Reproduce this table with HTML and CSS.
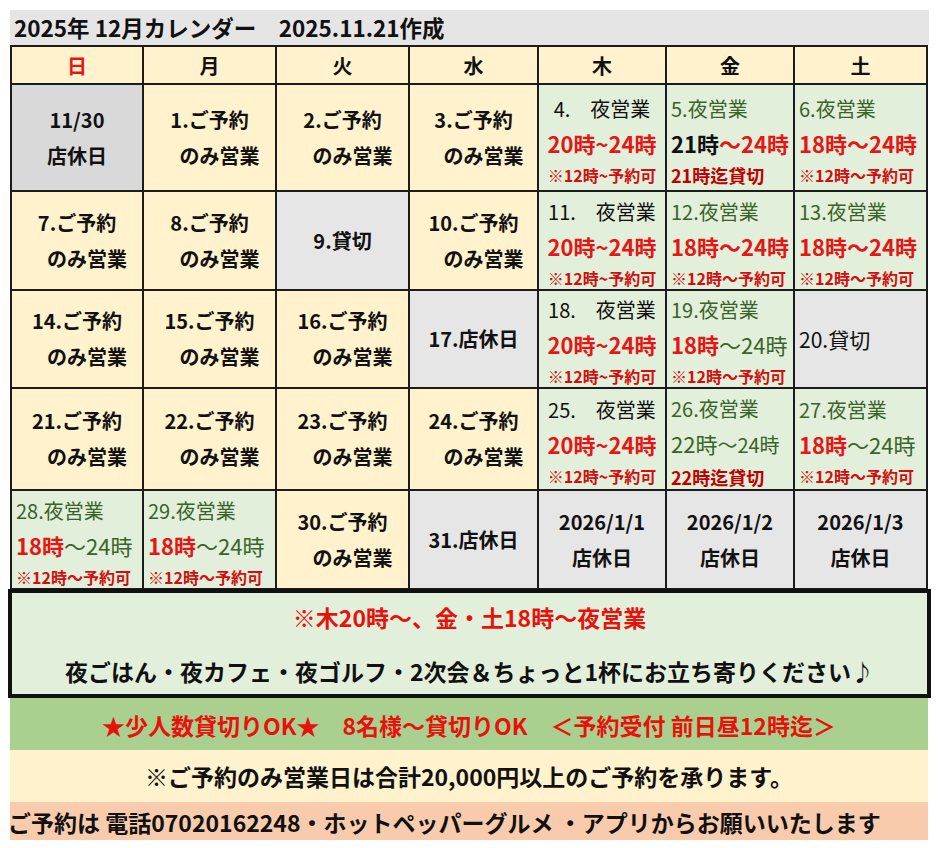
FILE: index.html
```html
<!DOCTYPE html>
<html lang="ja">
<head>
<meta charset="utf-8">
<title>2025年 12月カレンダー</title>
<link rel="stylesheet" href="styles.css">
</head>
<body>
<div class="page">
  <div class="title">2025年 12月カレンダー　2025.11.21作成</div>
  <div class="cal">
    <div class="cell cream ctr hd red">日</div>
    <div class="cell cream ctr hd">月</div>
    <div class="cell cream ctr hd">火</div>
    <div class="cell cream ctr hd">水</div>
    <div class="cell cream ctr hd">木</div>
    <div class="cell cream ctr hd">金</div>
    <div class="cell cream ctr hd">土</div>

    <!-- row 1 -->
    <div class="cell gray-d ctr bk"><div>11/30</div><div>店休日</div></div>
    <div class="cell cream ctr bk"><div>1.ご予約</div><div>　のみ営業</div></div>
    <div class="cell cream ctr bk"><div>2.ご予約</div><div>　のみ営業</div></div>
    <div class="cell cream ctr bk"><div>3.ご予約</div><div>　のみ営業</div></div>
    <div class="cell green ctr night"><div class="lab">4.　夜営業</div><div class="tm red">20時~24時</div><div class="nt">※12時~予約可</div></div>
    <div class="cell green lft night"><div class="lab grn">5.夜営業</div><div class="tm"><span class="blk">21時</span><span class="red">～24時</span></div><div class="kashi">21時迄貸切</div></div>
    <div class="cell green lft night"><div class="lab grn">6.夜営業</div><div class="tm red">18時～24時</div><div class="nt">※12時～予約可</div></div>

    <!-- row 2 -->
    <div class="cell cream ctr bk"><div>7.ご予約</div><div>　のみ営業</div></div>
    <div class="cell cream ctr bk"><div>8.ご予約</div><div>　のみ営業</div></div>
    <div class="cell gray ctr bk"><div>9.貸切</div></div>
    <div class="cell cream ctr bk"><div>10.ご予約</div><div>　のみ営業</div></div>
    <div class="cell green ctr night"><div class="lab">11.　夜営業</div><div class="tm red">20時~24時</div><div class="nt">※12時~予約可</div></div>
    <div class="cell green lft night"><div class="lab grn">12.夜営業</div><div class="tm red">18時～24時</div><div class="nt">※12時～予約可</div></div>
    <div class="cell green lft night"><div class="lab grn">13.夜営業</div><div class="tm red">18時～24時</div><div class="nt">※12時～予約可</div></div>

    <!-- row 3 -->
    <div class="cell cream ctr bk"><div>14.ご予約</div><div>　のみ営業</div></div>
    <div class="cell cream ctr bk"><div>15.ご予約</div><div>　のみ営業</div></div>
    <div class="cell cream ctr bk"><div>16.ご予約</div><div>　のみ営業</div></div>
    <div class="cell gray ctr bk"><div>17.店休日</div></div>
    <div class="cell green ctr night"><div class="lab">18.　夜営業</div><div class="tm red">20時~24時</div><div class="nt">※12時~予約可</div></div>
    <div class="cell green lft night"><div class="lab grn">19.夜営業</div><div class="tm"><span class="red">18時</span><span class="grn thin">～24時</span></div><div class="nt">※12時～予約可</div></div>
    <div class="cell gray lft"><div class="solo">20.貸切</div></div>

    <!-- row 4 -->
    <div class="cell cream ctr bk"><div>21.ご予約</div><div>　のみ営業</div></div>
    <div class="cell cream ctr bk"><div>22.ご予約</div><div>　のみ営業</div></div>
    <div class="cell cream ctr bk"><div>23.ご予約</div><div>　のみ営業</div></div>
    <div class="cell cream ctr bk"><div>24.ご予約</div><div>　のみ営業</div></div>
    <div class="cell green ctr night"><div class="lab">25.　夜営業</div><div class="tm red">20時~24時</div><div class="nt">※12時~予約可</div></div>
    <div class="cell green lft night"><div class="lab grn">26.夜営業</div><div class="tm grn thin">22時<span class="small">～24時</span></div><div class="kashi">22時迄貸切</div></div>
    <div class="cell green lft night"><div class="lab grn">27.夜営業</div><div class="tm"><span class="red">18時</span><span class="grn thin">～24時</span></div><div class="nt">※12時～予約可</div></div>

    <!-- row 5 -->
    <div class="cell green lft night"><div class="lab grn">28.夜営業</div><div class="tm"><span class="red">18時</span><span class="grn thin">～24時</span></div><div class="nt">※12時～予約可</div></div>
    <div class="cell green lft night"><div class="lab grn">29.夜営業</div><div class="tm"><span class="red">18時</span><span class="grn thin">～24時</span></div><div class="nt">※12時～予約可</div></div>
    <div class="cell cream ctr bk"><div>30.ご予約</div><div>　のみ営業</div></div>
    <div class="cell gray ctr bk"><div>31.店休日</div></div>
    <div class="cell gray ctr bk"><div>2026/1/1</div><div>店休日</div></div>
    <div class="cell gray ctr bk"><div>2026/1/2</div><div>店休日</div></div>
    <div class="cell gray ctr bk"><div>2026/1/3</div><div>店休日</div></div>
  </div>

  <div class="notice">
    <div class="n1">※木20時～、金・土18時～夜営業</div>
    <div class="n2">夜ごはん・夜カフェ・夜ゴルフ・2次会＆ちょっと1杯にお立ち寄りください♪</div>
  </div>
  <div class="okbar">★少人数貸切りOK★　8名様～貸切りOK　＜予約受付 前日昼12時迄＞</div>
  <div class="rule">※ご予約のみ営業日は合計20,000円以上のご予約を承ります。</div>
  <div class="contact">ご予約は 電話07020162248・ホットペッパーグルメ ・アプリからお願いいたします</div>
</div>
</body>
</html>
```

FILE: styles.css
```css
html, body {
  margin: 0;
  padding: 0;
  background: #ffffff;
}

body {
  font-family: "Noto Sans CJK JP", "Noto Sans", sans-serif;
  color: #111111;
}

.page {
  padding: 10px 0 0 10px;
  width: 925px;
}

.title {
  width: 919px;
  height: 35px;
  box-sizing: border-box;
  padding-left: 4px;
  background: #e5e5e5;
  font-size: 22.5px;
  font-weight: 700;
  line-height: 35px;
  white-space: pre;
}

.cal {
  display: grid;
  grid-template-columns: 130px 131px 131px 127px 126px 126px 131px;
  grid-template-rows: 36px 105px 97px 96px 100px 97px;
  gap: 2px;
  padding: 2px;
  width: 918px;
  box-sizing: border-box;
  background: #1c1c1c;
}

.cell {
  display: flex;
  flex-direction: column;
  justify-content: center;
  white-space: nowrap;
  box-sizing: border-box;
  min-width: 0;
}

.ctr {
  align-items: center;
  text-align: center;
}

.lft {
  align-items: flex-start;
  padding-left: 4px;
}

.cream { background: #fff2cc; }
.green { background: #e2efda; }
.gray { background: #e6e6e6; }
.gray-d { background: #d9d9d9; }

.hd {
  font-size: 20px;
  font-weight: 700;
}

.bk {
  font-size: 20px;
  font-weight: 700;
  line-height: 36px;
}

.night {
  padding-top: 6px;
}

.lab {
  font-size: 20px;
  line-height: 32px;
  font-weight: 400;
}

.tm {
  font-size: 22px;
  line-height: 36px;
  font-weight: 700;
}

.nt {
  font-size: 16px;
  line-height: 28px;
  font-weight: 700;
  color: #d10f0f;
}

.kashi {
  font-size: 18px;
  line-height: 28px;
  font-weight: 700;
  color: #c00000;
}

.solo {
  font-size: 21px;
  font-weight: 400;
}

.red { color: #e51616; }
.grn { color: #3a6329; }
.blk { color: #111111; }
.thin { font-weight: 400; }
.small { font-size: 20px; }

.notice {
  margin: -1px 0 0 -2px;
  width: 923px;
  height: 109px;
  box-sizing: border-box;
  border: 4px solid #111111;
  background: #e2efda;
  text-align: center;
  white-space: nowrap;
}

.n1 {
  margin-top: 8px;
  font-size: 23px;
  font-weight: 700;
  line-height: 32px;
  color: #e8120c;
}

.n2 {
  margin-top: 22px;
  font-size: 23px;
  font-weight: 700;
  line-height: 32px;
}

.okbar {
  width: 918px;
  height: 52px;
  background: #a9d08e;
  color: #e8120c;
  font-size: 23px;
  font-weight: 700;
  line-height: 54px;
  text-align: center;
  white-space: pre;
}

.rule {
  width: 918px;
  height: 52px;
  background: #fff2cc;
  font-size: 23px;
  font-weight: 700;
  line-height: 52px;
  text-align: center;
  white-space: nowrap;
}

.contact {
  width: 918px;
  height: 38px;
  background: #f8cbad;
  font-size: 23px;
  font-weight: 700;
  line-height: 40px;
  text-indent: -2px;
  white-space: pre;
}
```
